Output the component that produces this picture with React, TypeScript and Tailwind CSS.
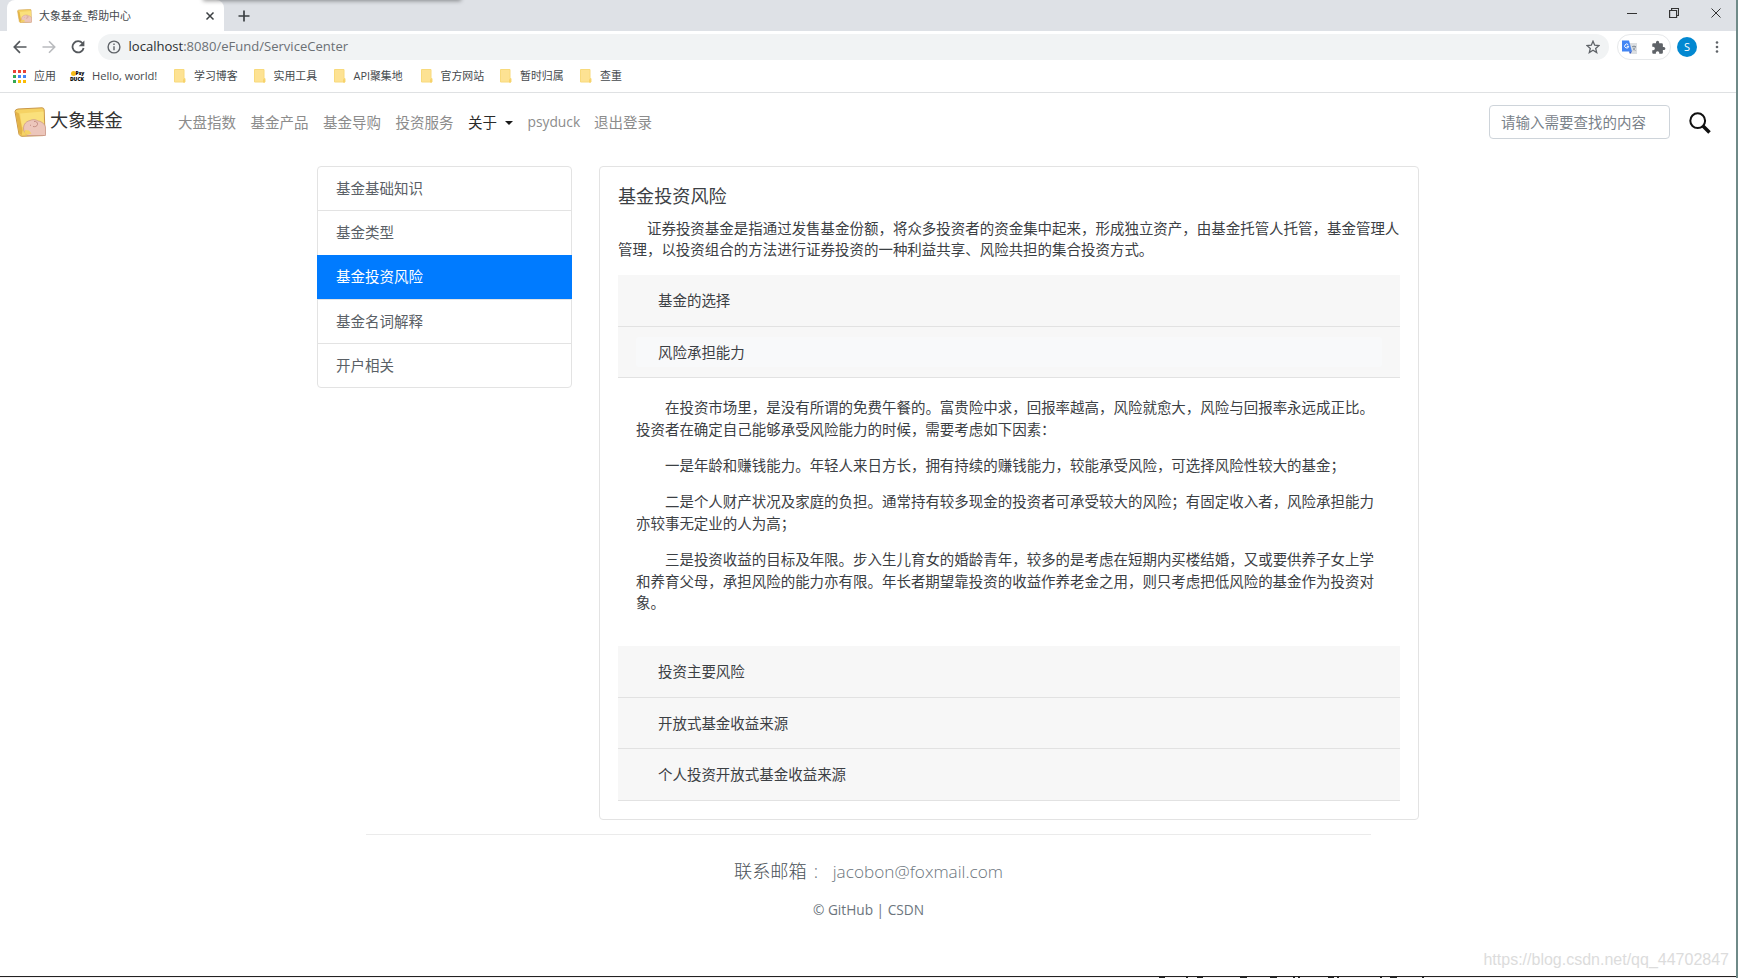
import type { ReactNode } from "react";

const bookmarks = [
  { label: "学习博客", width: "w-[79.5px]" },
  { label: "实用工具", width: "w-[80px]" },
  { label: "API聚集地", width: "w-[87px]" },
  { label: "官方网站", width: "w-[79.5px]" },
  { label: "暂时归属", width: "w-[80px]" },
  { label: "查重", width: "w-[60px]" },
];

const sidebar = ["基金基础知识", "基金类型", "基金投资风险", "基金名词解释", "开户相关"];

// x offset and width of each dark mark on the bottom edge
const edgeMarks = [
  [1159, 6], [1186, 2], [1197, 6], [1240, 7], [1270, 7], [1293, 2], [1298, 2],
  [1328, 6], [1337, 2], [1380, 2], [1390, 7], [1422, 2],
];

function FundLogo({ className }: { className: string }) {
  return (
    <svg viewBox="0 0 32 30" className={className} aria-hidden="true">
      <path d="M1 4.500Q1 2.500 4 2L28 .8q2 0 2.200 2L31 27q0 1.500-2 1.600L8 29.300q-2 0-3-2z" fill="#f5d264" stroke="#c9974a" strokeWidth="1" />
      <path d="M6 6.500 29.500 4.500 30 17 8 20z" fill="#fae07c" />
      <path d="M1.500 4.500 5 6.500l3.500 17L7.500 28.500 5 26z" fill="#e3b347" />
      <path d="M10 24c-1.500-5 1-9.500 6-10.500 2-1.200 6-1.200 8 .5 4.500.5 7.500 4 7.500 7v7.500H13z" fill="#ecc6bb" stroke="#c79286" strokeWidth=".7" />
      <path d="M20 14.500c2-.5 4 1 3.500 3s-2.500 2.500-4.500 2m-3-1.500 1 .5" fill="none" stroke="#b98076" strokeWidth=".8" />
      <path d="m11 23 4 .5 2.500 3-4.500 1.500-2.500-2z" fill="#f5d264" />
    </svg>
  );
}

function FolderIcon() {
  return (
    <svg viewBox="0 0 12 14" className="h-[14px] w-[12px] shrink-0" aria-hidden="true">
      <path d="M.5.500h9.500v9h1v3.500H.5z" fill="#fde293" stroke="#f8da7c" />
      <path d="M9 13.500v-3l1-1 1 1v3z" fill="#f7d26a" />
    </svg>
  );
}

function TabStrip() {
  return (
    <div className="relative flex h-[31px] bg-[#dee1e6] pl-[7px]">
      <div className="flex w-[217px] items-center rounded-t-lg bg-white pl-[10px] pr-[9px]">
        <FundLogo className="h-[14px] w-[15px]" />
        <span className="ml-[7px] mt-px text-[10.900px] text-[#45494d]">大象基金_帮助中心</span>
        <svg viewBox="0 0 10 10" className="ml-auto size-[10px]" stroke="#3c4043" strokeWidth="1.500" aria-hidden="true">
          <path d="m1.500 1.500 7 7m0-7-7 7" />
        </svg>
      </div>
      <svg viewBox="0 0 12 12" className="ml-[14px] mt-[9.500px] size-[12px]" stroke="#3c4043" strokeWidth="1.700" aria-hidden="true">
        <path d="M6 .5v11M.5 6h11" />
      </svg>
      <div className="ml-auto mr-[15px] flex h-[26px] items-center gap-[32px]">
        <svg viewBox="0 0 10 10" className="size-[10px]" stroke="#333" aria-hidden="true">
          <path d="M0 5.500h10" />
        </svg>
        <svg viewBox="0 0 10 10" className="size-[10px]" fill="none" stroke="#333" strokeWidth="1.200" aria-hidden="true">
          <path d="M.6 2.500h7v7h-7zM2.600 2.500v-2h7v7h-2" />
        </svg>
        <svg viewBox="0 0 10 10" className="size-[10px]" stroke="#333" aria-hidden="true">
          <path d="m.5.500 9 9m0-9-9 9" />
        </svg>
      </div>
      <div className="absolute -top-1 left-[204px] h-1 w-[256px] shadow-[0_0_4px_1px_rgba(0,0,0,0.4)]" />
    </div>
  );
}

function Toolbar() {
  return (
    <div className="flex h-[32px] items-center bg-white pl-[13px]">
      <svg viewBox="0 0 14 14" className="size-[14px]" fill="none" stroke="#55595d" strokeWidth="1.700" aria-hidden="true">
        <path d="M13.500 7H1.500M7 1.200 1.300 7 7 12.800" />
      </svg>
      <svg viewBox="0 0 14 14" className="ml-[15px] size-[14px]" fill="none" stroke="#b9bbbe" strokeWidth="1.600" aria-hidden="true">
        <path d="M.5 7h12M7 1.200 12.700 7 7 12.800" />
      </svg>
      <svg viewBox="0 0 14 14" className="ml-[15px] size-[14px]" fill="none" stroke="#55595d" strokeWidth="1.800" aria-hidden="true">
        <path d="M11.500 3.300A5.600 5.600 0 1 0 12.600 8" />
        <path d="M13.400.5v5.700H7.700z" fill="#55595d" stroke="none" />
      </svg>
      <div className="ml-[13px] flex h-[26px] w-[1511px] items-center rounded-full bg-[#f1f3f4] pl-[9px] pr-[9px]">
        <svg viewBox="0 0 14 14" className="size-[14px]" fill="none" stroke="#5f6368" strokeWidth="1.400" aria-hidden="true">
          <circle cx="7" cy="7" r="5.900" />
          <path d="M7 6.200v4M7 3.500V5" />
        </svg>
        <span className="-mt-px ml-[7.500px] text-[13.050px] leading-none text-[#6b7075]">
          <span className="text-[#2a2d31]">localhost</span>:8080/eFund/ServiceCenter
        </span>
        <svg viewBox="0 0 14 14" className="ml-auto size-[14px]" fill="none" stroke="#5f6368" strokeWidth="1.300" aria-hidden="true">
          <path d="m7 1.200 1.700 4 4.300.4-3.300 2.800 1 4.200L7 10.300l-3.700 2.300 1-4.200L1 5.600l4.300-.4z" />
        </svg>
      </div>
      <div className="ml-[8px] flex h-[26px] w-[54px] items-center rounded-full border border-[#e6e8ea] pl-[4px]">
        <svg viewBox="0 0 15 15" className="size-[15px]" aria-hidden="true">
          <path d="M6 3h9v11H8z" fill="#dcdfe2" />
          <path d="M0 .5h7l3 11H0z" fill="#4285f4" />
          <path d="M7 11.500h3l-2 2.500z" fill="#3056c4" />
          <path d="M6.300 4.800a2 2 0 1 0 .4 1.500H4.800" fill="none" stroke="#fff" />
          <path d="M10 6.500h4M12 5.500v1m1.500 0c-.5 2-1.500 3-2.700 3.800M11 7.500c.5 1.500 1.500 2.500 2.500 3" fill="none" stroke="#7b8794" strokeWidth=".8" />
        </svg>
        <svg viewBox="0 0 24 24" className="ml-[14px] size-[15px]" fill="#5f6368" aria-hidden="true">
          <path d="M20.500 11H19V7a2 2 0 0 0-2-2h-4V3.500a2.500 2.500 0 0 0-5 0V5H4a2 2 0 0 0-2 2v3.800h1.500a2.700 2.700 0 0 1 0 5.400H2V20c0 1.100.9 2 2 2h3.800v-1.500a2.700 2.700 0 0 1 5.400 0V22H17a2 2 0 0 0 2-2v-4h1.500a2.500 2.500 0 0 0 0-5z" />
        </svg>
      </div>
      <div className="ml-[6px] flex size-[20px] items-center justify-center rounded-full bg-[#0288d1] text-[11px] text-white">S</div>
      <svg viewBox="0 0 4 12" className="ml-[18px] h-[12px] w-[4px]" fill="#5f6368" aria-hidden="true">
        <circle cx="2" cy="1.500" r="1.300" />
        <circle cx="2" cy="6" r="1.300" />
        <circle cx="2" cy="10.500" r="1.300" />
      </svg>
    </div>
  );
}

function BookmarksBar() {
  return (
    <div className="flex h-[30px] items-center border-b border-[#dfe1e3] pb-[3px] pl-[13px] text-[10.900px] text-[#45494d]">
      <svg viewBox="0 0 13 13" className="size-[13px]" aria-hidden="true">
        <path d="M0 0h3v3H0zM5 0h3v3H5zM10 0h3v3h-3z" fill="#ea4335" />
        <path d="M0 5h3v3H0zM0 10h3v3H0z" fill="#34a853" />
        <path d="M5 5h3v3H5zM10 5h3v3h-3z" fill="#4285f4" />
        <path d="M5 10h3v3H5zM10 10h3v3h-3z" fill="#fbbc04" />
      </svg>
      <span className="ml-[8px] mt-px w-[36px]">应用</span>
      <div className="w-[15px] text-center text-[5px] font-black leading-[6px] text-black">
        <span className="flex items-center justify-center">
          <span className="size-[5px] rounded-full bg-[#f5bd18]" />
          Psy
        </span>
        <span className="-ml-px block">DUCK</span>
      </div>
      <span className="ml-[7px] mt-px w-[82px] text-[11.200px]">Hello, world!</span>
      {bookmarks.map((item) => (
        <div key={item.label} className={`flex items-center gap-[8px] ${item.width}`}>
          <FolderIcon />
          <span className="mt-px whitespace-nowrap">{item.label}</span>
        </div>
      ))}
    </div>
  );
}

function Navbar() {
  return (
    <nav className="flex h-[59px] items-center pb-px pl-[13px] pr-[25px] text-[14.500px] text-[#8c8c8c]">
      <FundLogo className="h-[30px] w-[34px]" />
      <span className="-mt-[3px] ml-[3px] w-[128px] text-[18.200px] text-[#333]">大象基金</span>
      <div className="mt-px flex items-center gap-[14.500px]">
        <span>大盘指数</span>
        <span>基金产品</span>
        <span>基金导购</span>
        <span>投资服务</span>
        <span className="flex items-center gap-[8px] text-[#2a2a2a]">
          关于
          <span className="border-x-[4.500px] border-t-[4.500px] border-x-transparent border-t-[#1a1a1a]" />
        </span>
        <span className="w-[52px] text-[13.800px]">psyduck</span>
        <span>退出登录</span>
      </div>
      <input
        className="ml-auto h-[34px] w-[181px] rounded-[4px] border border-[#ced4da] px-[11px] text-[14.500px] placeholder:text-[#7a828a]"
        placeholder="请输入需要查找的内容"
      />
      <svg viewBox="0 0 22 22" className="ml-[19px] mt-[2px] size-[22px]" fill="none" stroke="#111" aria-hidden="true">
        <circle cx="8.700" cy="8.700" r="7.400" strokeWidth="2" />
        <path d="m14 14 6.500 6.500" strokeWidth="3.600" />
      </svg>
    </nav>
  );
}

function Sidebar() {
  return (
    <ul className="w-[255px] self-start text-[14.500px] text-[#5a6066]">
      {sidebar.map((label) => {
        const active = label === "基金投资风险";
        return (
          <li
            key={label}
            className={`-mb-px flex h-[45.300px] items-center border px-[18px] first:rounded-t-[4px] last:rounded-b-[4px] ${
              active ? "z-10 border-[#007bff] bg-[#007bff] text-white" : "border-[#e3e3e3]"
            }`}
          >
            {label}
          </li>
        );
      })}
    </ul>
  );
}

function PanelHeader({ children, focused }: { children: ReactNode; focused?: boolean }) {
  return (
    <div className="h-[51.500px] border-b border-[#e2e2e2] bg-[#f7f7f7] px-[18px] pt-[10.500px]">
      <div className={`flex h-[30px] items-center rounded-[3px] px-[22px] ${focused ? "bg-[#f8f9fa]" : ""}`}>
        {children}
      </div>
    </div>
  );
}

function RiskCard() {
  return (
    <section className="h-[654px] w-[820px] rounded-[4px] border border-[#e3e3e3] px-[18px] pt-[18px] text-[14.480px] leading-[21.700px] text-[#3c4044]">
      <h5 className="text-[18.100px] leading-[22px]">基金投资风险</h5>
      <p className="mt-[10.500px] whitespace-nowrap indent-[2em]">
        证券投资基金是指通过发售基金份额，将众多投资者的资金集中起来，形成独立资产，由基金托管人托管，基金管理人
        <br />
        管理，以投资组合的方法进行证券投资的一种利益共享、风险共担的集合投资方式。
      </p>
      <div className="mt-[14.500px] w-[782px]">
        <PanelHeader>基金的选择</PanelHeader>
        <PanelHeader focused>风险承担能力</PanelHeader>
        <div className="flex h-[268px] flex-col gap-[14.500px] whitespace-nowrap px-[18px] pt-[18.500px]">
          <p className="indent-[2em]">
            在投资市场里，是没有所谓的免费午餐的。富贵险中求，回报率越高，风险就愈大，风险与回报率永远成正比。
            <br />
            投资者在确定自己能够承受风险能力的时候，需要考虑如下因素：
          </p>
          <p className="indent-[2em]">
            一是年龄和赚钱能力。年轻人来日方长，拥有持续的赚钱能力，较能承受风险，可选择风险性较大的基金；
          </p>
          <p className="indent-[2em]">
            二是个人财产状况及家庭的负担。通常持有较多现金的投资者可承受较大的风险；有固定收入者，风险承担能力
            <br />
            亦较事无定业的人为高；
          </p>
          <p className="indent-[2em]">
            三是投资收益的目标及年限。步入生儿育女的婚龄青年，较多的是考虑在短期内买楼结婚，又或要供养子女上学
            <br />
            和养育父母，承担风险的能力亦有限。年长者期望靠投资的收益作养老金之用，则只考虑把低风险的基金作为投资对
            <br />
            象。
          </p>
        </div>
        <PanelHeader>投资主要风险</PanelHeader>
        <PanelHeader>开放式基金收益来源</PanelHeader>
        <PanelHeader>个人投资开放式基金收益来源</PanelHeader>
      </div>
    </section>
  );
}

function Footer() {
  return (
    <footer className="ml-[366px] mt-[14px] flex w-[1005px] flex-col items-center border-t border-[#ebebeb] pt-[24px] text-[#6c757d]">
      <p className="flex h-[26px] items-center text-[18.200px] font-light">
        <span className="text-[#4a5056]">联系邮箱</span>
        <span className="ml-[7px] w-[19px]">:</span>
        <span className="text-[17.200px]">jacobon@foxmail.com</span>
      </p>
      <p className="mt-[14px] flex h-[22px] items-center text-[13.700px]">© GitHub | CSDN</p>
    </footer>
  );
}

export default function App() {
  return (
    <div lang="zh-CN" className="relative flex h-[978px] w-[1738px] flex-col overflow-hidden border-r-2 border-[#6f8a88] bg-white font-['Open_Sans','Noto_Sans_CJK_SC',sans-serif]">
      <TabStrip />
      <Toolbar />
      <BookmarksBar />
      <Navbar />
      <main className="ml-[317px] mt-[14px] flex h-[654px] gap-[27px]">
        <Sidebar />
        <RiskCard />
      </main>
      <Footer />
      <div className="relative mt-auto h-[2px] shrink-0 border-t border-[#222] bg-[#f3eff0]">
        {edgeMarks.map(([left, width]) => (
          <span key={left} className="absolute top-0 h-px bg-[#222]" style={{ left, width }} />
        ))}
      </div>
      <span className="absolute bottom-[6px] right-[7px] font-['Liberation_Sans',sans-serif] text-[16px] text-[#dcdcdc]">
        https://blog.csdn.net/qq_44702847
      </span>
    </div>
  );
}
